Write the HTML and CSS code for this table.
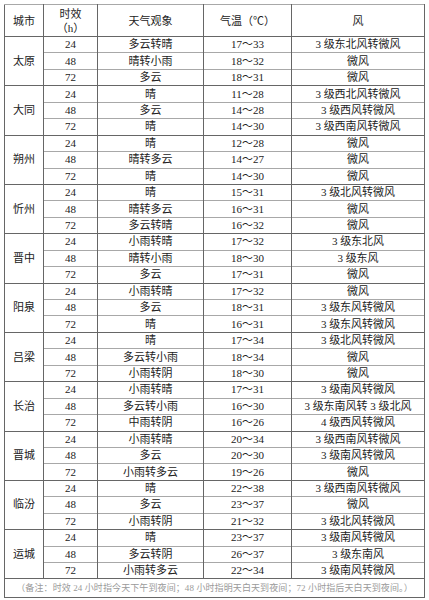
FILE: index.html
```html
<!DOCTYPE html>
<html lang="zh">
<head>
<meta charset="utf-8">
<link rel="stylesheet" href="styles.css">
</head>
<body>
<table class="wx">
<colgroup>
<col class="c-city"><col class="c-h"><col class="c-wx"><col class="c-t"><col class="c-w">
</colgroup>
<thead>
<tr class="head"><th>城市</th><th>时效<br>（h）</th><th>天气观象</th><th>气温（℃）</th><th>风</th></tr>
</thead>
<tbody>
<tr class="g"><td rowspan="3" class="city">太原</td><td>24</td><td>多云转晴</td><td>17～33</td><td>3 级东北风转微风</td></tr>
<tr><td>48</td><td>晴转小雨</td><td>18～32</td><td>微风</td></tr>
<tr><td>72</td><td>多云</td><td>18～31</td><td>微风</td></tr>
<tr class="g"><td rowspan="3" class="city">大同</td><td>24</td><td>晴</td><td>11～28</td><td>3 级西北风转微风</td></tr>
<tr><td>48</td><td>多云</td><td>14～28</td><td>3 级西风转微风</td></tr>
<tr><td>72</td><td>晴</td><td>14～30</td><td>3 级西南风转微风</td></tr>
<tr class="g"><td rowspan="3" class="city">朔州</td><td>24</td><td>晴</td><td>12～28</td><td>微风</td></tr>
<tr><td>48</td><td>晴转多云</td><td>14～27</td><td>微风</td></tr>
<tr><td>72</td><td>晴</td><td>14～30</td><td>微风</td></tr>
<tr class="g"><td rowspan="3" class="city">忻州</td><td>24</td><td>晴</td><td>15～31</td><td>3 级北风转微风</td></tr>
<tr><td>48</td><td>晴转多云</td><td>16～31</td><td>微风</td></tr>
<tr><td>72</td><td>多云转晴</td><td>16～32</td><td>微风</td></tr>
<tr class="g"><td rowspan="3" class="city">晋中</td><td>24</td><td>小雨转晴</td><td>17～32</td><td>3 级东北风</td></tr>
<tr><td>48</td><td>晴转小雨</td><td>18～30</td><td>3 级东风</td></tr>
<tr><td>72</td><td>多云</td><td>17～31</td><td>微风</td></tr>
<tr class="g"><td rowspan="3" class="city">阳泉</td><td>24</td><td>小雨转晴</td><td>17～32</td><td>微风</td></tr>
<tr><td>48</td><td>多云</td><td>18～31</td><td>3 级东风转微风</td></tr>
<tr><td>72</td><td>晴</td><td>16～31</td><td>3 级东风转微风</td></tr>
<tr class="g"><td rowspan="3" class="city">吕梁</td><td>24</td><td>晴</td><td>17～34</td><td>3 级北风转微风</td></tr>
<tr><td>48</td><td>多云转小雨</td><td>18～34</td><td>微风</td></tr>
<tr><td>72</td><td>小雨转阴</td><td>18～30</td><td>微风</td></tr>
<tr class="g"><td rowspan="3" class="city">长治</td><td>24</td><td>小雨转晴</td><td>17～31</td><td>3 级南风转微风</td></tr>
<tr><td>48</td><td>多云转小雨</td><td>16～30</td><td>3 级东南风转 3 级北风</td></tr>
<tr><td>72</td><td>中雨转阴</td><td>16～26</td><td>4 级西风转微风</td></tr>
<tr class="g"><td rowspan="3" class="city">晋城</td><td>24</td><td>小雨转晴</td><td>20～34</td><td>3 级西南风转微风</td></tr>
<tr><td>48</td><td>多云</td><td>20～30</td><td>3 级南风转微风</td></tr>
<tr><td>72</td><td>小雨转多云</td><td>19～26</td><td>微风</td></tr>
<tr class="g"><td rowspan="3" class="city">临汾</td><td>24</td><td>晴</td><td>22～38</td><td>3 级西南风转微风</td></tr>
<tr><td>48</td><td>多云</td><td>23～37</td><td>微风</td></tr>
<tr><td>72</td><td>小雨转阴</td><td>21～32</td><td>3 级北风转微风</td></tr>
<tr class="g"><td rowspan="3" class="city">运城</td><td>24</td><td>晴</td><td>23～37</td><td>3 级南风转微风</td></tr>
<tr><td>48</td><td>多云转阴</td><td>26～37</td><td>3 级东南风</td></tr>
<tr><td>72</td><td>小雨转多云</td><td>22～34</td><td>3 级南风转微风</td></tr>
<tr class="note g"><td colspan="5">（备注：时效 24 小时指今天下午到夜间；48 小时指明天白天到夜间；72 小时指后天白天到夜间。）</td></tr>
</tbody>
</table>
</body>
</html>
```
FILE: styles.css
```css
html, body {
  margin: 0;
  padding: 0;
  background: #ffffff;
}
body {
  padding: 4px 0 0 4px;
}
.wx {
  border-collapse: collapse;
  table-layout: fixed;
  width: 420px;
  font-family: "Liberation Serif", "Noto Sans CJK SC", serif;
  font-size: 11px;
  color: #222;
  border: 1px solid #666;
}
.c-city { width: 39px; }
.c-h { width: 54px; }
.c-wx { width: 106px; }
.c-t { width: 88px; }
.c-w { width: 133px; }
.wx th, .wx td {
  border-top: 1px solid #a8a8a8;
  border-left: 1px solid #666;
  border-right: 1px solid #666;
  padding: 0;
  text-align: center;
  vertical-align: middle;
  line-height: 15px;
  white-space: nowrap;
  overflow: hidden;
}
.wx th {
  font-weight: normal;
  height: 31px;
  line-height: 14px;
  border-bottom: 1px solid #666;
}
.wx tbody tr {
  height: 16.45px;
}
.wx tr.g td {
  border-top: 1px solid #666;
}
.wx td.city {
  border-top: 1px solid #666;
  border-bottom: 1px solid #666;
}
.wx .note td {
  height: 18px;
  font-size: 9px;
  color: #9a9a9a;
  letter-spacing: 0.1px;
}
```
